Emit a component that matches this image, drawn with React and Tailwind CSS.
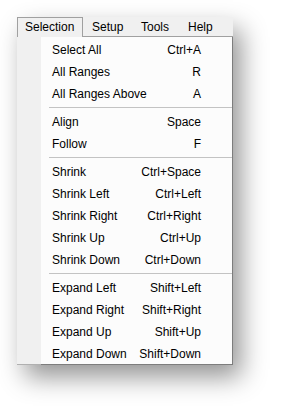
const groups = [
    [
        ["Select All", "Ctrl+A"],
        ["All Ranges", "R"],
        ["All Ranges Above", "A"],
    ],
    [
        ["Align", "Space"],
        ["Follow", "F"],
    ],
    [
        ["Shrink", "Ctrl+Space"],
        ["Shrink Left", "Ctrl+Left"],
        ["Shrink Right", "Ctrl+Right"],
        ["Shrink Up", "Ctrl+Up"],
        ["Shrink Down", "Ctrl+Down"],
    ],
    [
        ["Expand Left", "Shift+Left"],
        ["Expand Right", "Shift+Right"],
        ["Expand Up", "Shift+Up"],
        ["Expand Down", "Shift+Down"],
    ],
];

const MenuItem = ({ label, shortcut }) => {
    return (
        <div className="flex h-[22px] items-center justify-between pl-[11px] pr-[31px] pt-px">
            <span>{label}</span>
            <span>{shortcut}</span>
        </div>
    );
};

const App = () => {
    return (
        <div
            className="min-h-screen bg-white pl-[17px] pt-[17px] text-[12px] text-black"
            style={{ fontFamily: '"Liberation Sans", Arial, sans-serif' }}
        >
            <div className="w-[216px] shadow-[8px_12px_24px_rgba(0,0,0,0.42)]">
                {/* Menu bar */}
                <div className="flex h-[20px] bg-[#f0f0f0]">
                    <div className="w-[66px] border-l border-t border-r border-[#a0a0a0] bg-[#f0f0f0] pl-[7px] leading-[19px]">
                        Selection
                    </div>
                    <div className="flex flex-1 border-b border-[#a0a0a0] pt-px leading-[18px]">
                        <span className="ml-[9px] w-[49px]">Setup</span>
                        <span className="w-[47px]">Tools</span>
                        <span>Help</span>
                    </div>
                </div>

                {/* Dropdown */}
                <div className="flex">
                    <div className="w-[24px] border-b border-[#b0b0b0] bg-[#f0f0f0]" />
                    <div className="flex-1 border-r border-b border-[#7d7d7d] bg-[#fcfcfc] pt-px">
                        {groups.map((group, i) => (
                            <div key={i}>
                                {i > 0 && (
                                    <div className="flex h-[6px] items-center pl-[8px]">
                                        <div className="h-px w-full bg-[#c3c3c3]" />
                                    </div>
                                )}
                                {group.map(([label, shortcut]) => (
                                    <MenuItem
                                        key={label}
                                        label={label}
                                        shortcut={shortcut}
                                    />
                                ))}
                            </div>
                        ))}
                    </div>
                </div>
            </div>
        </div>
    );
};

export default App;
